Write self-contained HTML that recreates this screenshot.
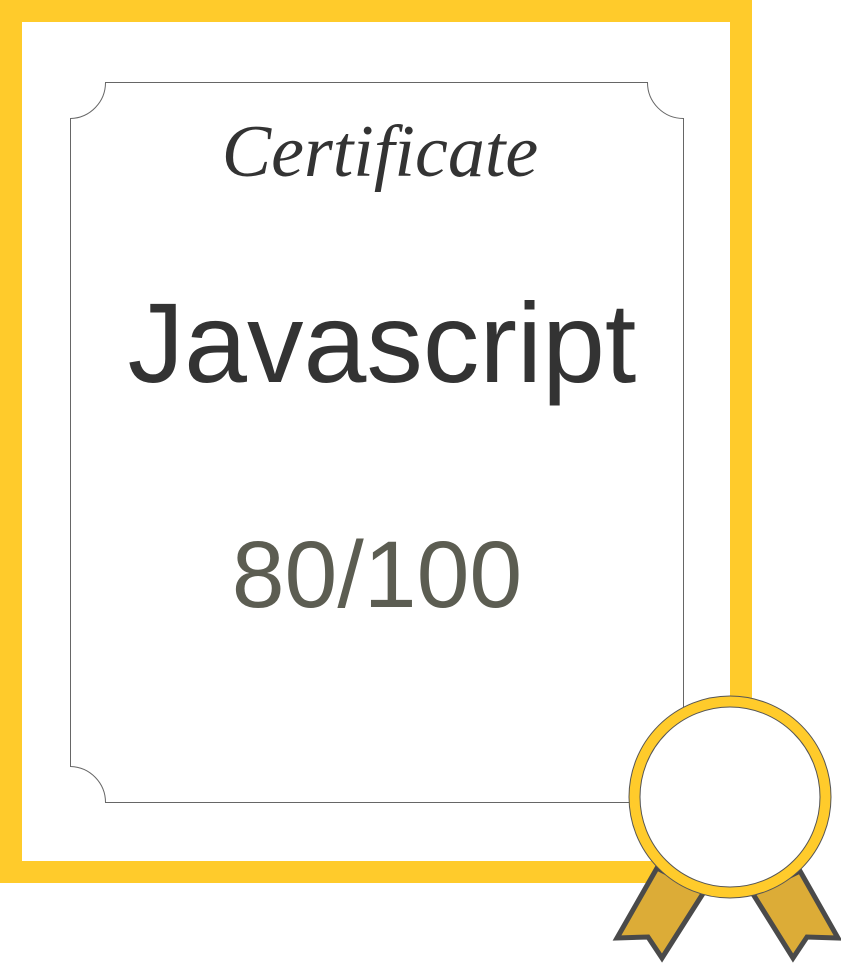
<!DOCTYPE html>
<html><head><meta charset="utf-8"><style>
html,body{margin:0;padding:0;background:#fff;width:841px;height:967px;overflow:hidden;position:relative}
.t{position:absolute;white-space:nowrap;left:0;width:752px;text-align:center}
</style></head><body>
<svg width="841" height="967" style="position:absolute;left:0;top:0">
<rect x="11" y="11" width="730" height="861" fill="#fff" stroke="#ffcb2b" stroke-width="22"/>
<path d="M105.5,82.5 H647.5 A36,36 0 0 0 683.5,118.5 V766.5 A36,36 0 0 0 647.5,802.5 H105.5 A36,36 0 0 0 70.5,766.5 V118.5 A36,36 0 0 0 105.5,82.5 Z" fill="none" stroke="#666" stroke-width="1"/>
<polygon points="657,868 704,892 662,958 648,937 617,938" fill="#dcac37" stroke="#4a4a4a" stroke-width="5" stroke-linejoin="miter"/>
<polygon points="800,871 753,894 793,958 807,937 838,938" fill="#dcac37" stroke="#4a4a4a" stroke-width="5" stroke-linejoin="miter"/>
<circle cx="730" cy="797" r="101" fill="#ffcb2b" stroke="#555" stroke-width="1"/>
<circle cx="730" cy="797" r="90" fill="#fff" stroke="#555" stroke-width="1"/>
</svg>
<div class="t" style="top:110px;font:italic 74px 'Liberation Serif',serif;color:#333;left:4px">Certificate</div>
<div class="t" style="top:278px;font:113px 'Liberation Sans',sans-serif;color:#333;left:6px">Javascript</div>
<div class="t" style="top:521px;font:95px 'Liberation Sans',sans-serif;color:#5c5d52;left:1px">80/100</div>
</body></html>
